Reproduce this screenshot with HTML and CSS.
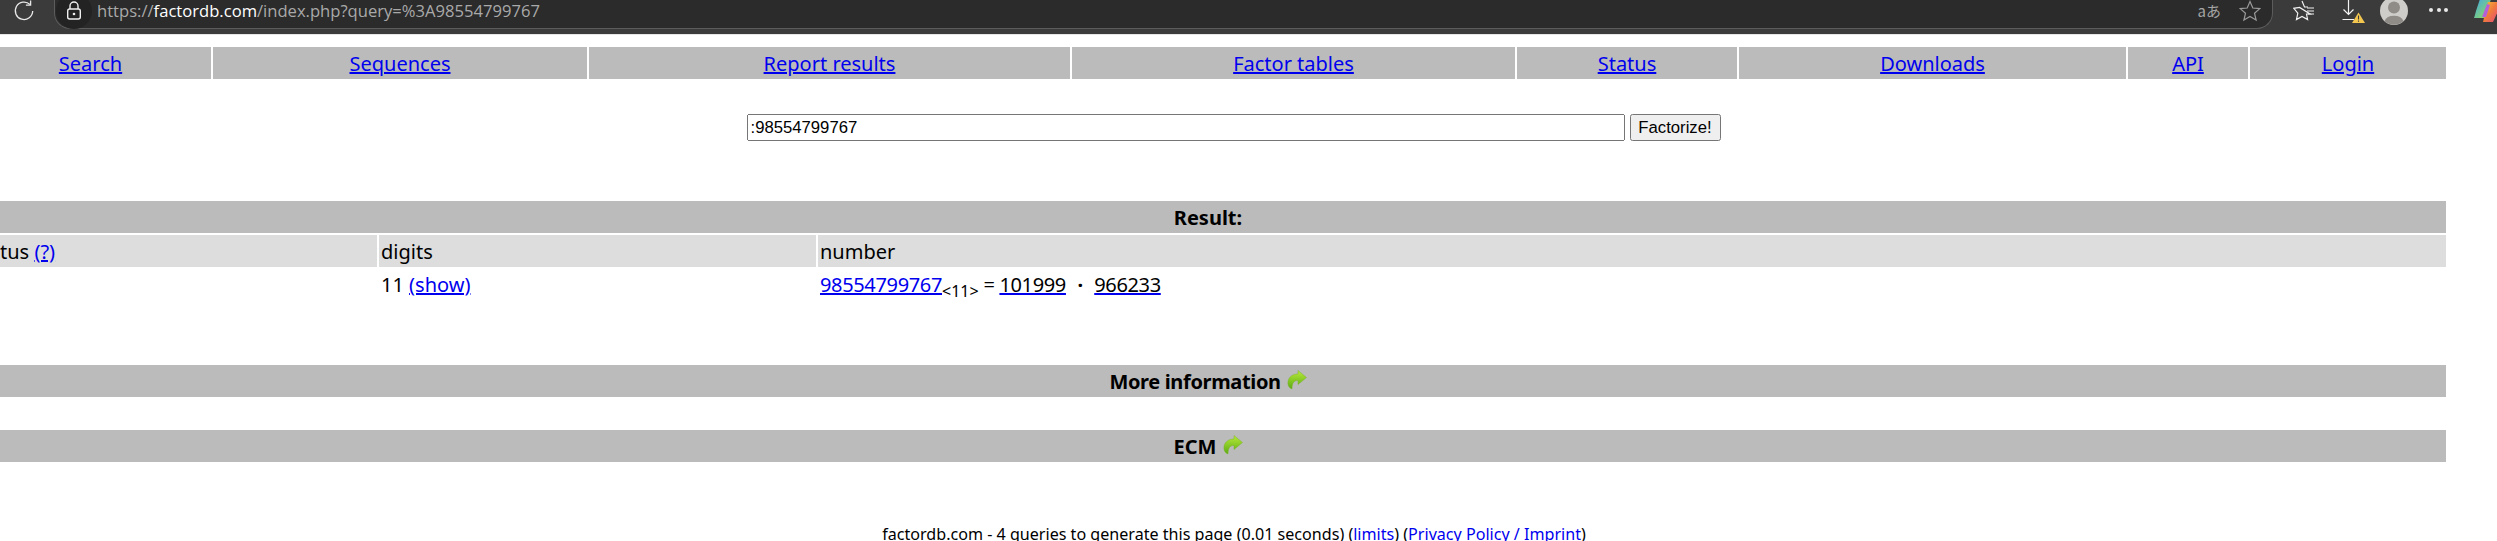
FILE: index.html
```html
<!DOCTYPE html>
<html lang="en">
<head>
    <meta charset="UTF-8">
    <meta name="viewport" content="width=device-width, initial-scale=1.0">
    <title>factordb.com</title>
    <link rel="stylesheet" href="styles.css">
</head>
<body>
    <div class="toolbar">
        <svg class="reload" width="22" height="22" viewBox="0 0 22 22">
            <path d="M17 4.5 A8.7 8.7 0 1 0 19.7 11" fill="none" stroke="#e8e8e8" stroke-width="1.3"/>
            <path d="M17.6 0.5 V5.2 H12.9" fill="none" stroke="#e8e8e8" stroke-width="1.3"/>
        </svg>
        <div class="addressbar">
            <span class="lock">
                <svg width="18" height="20" viewBox="0 0 18 20">
                    <path d="M5 8 V5 A4 4 0 0 1 13 5 V8" fill="none" stroke="#efefef" stroke-width="1.4"/>
                    <rect x="2.7" y="8" width="12.6" height="10" rx="2" fill="none" stroke="#efefef" stroke-width="1.4"/>
                    <circle cx="9" cy="13" r="1.3" fill="#efefef"/>
                </svg>
            </span>
            <span class="url">https://<b>factordb.com</b>/index.php?query=%3A98554799767</span>
            <span class="translate">aあ</span>
            <svg class="star" width="22" height="22" viewBox="0 0 22 22">
                <path d="M11 1.5 L13.8 8 L20.8 8.6 L15.5 13.2 L17.1 20 L11 16.4 L4.9 20 L6.5 13.2 L1.2 8.6 L8.2 8 Z" fill="none" stroke="#9a9a9a" stroke-width="1.2"/>
            </svg>
        </div>
        <svg class="favorites" width="22" height="22" viewBox="0 0 22 22">
            <path d="M9 1 L11.5 7 H15 M17 14 H13.5 L14.6 19.5 L9 16.4 L3.5 19.5 L4.8 13.2 L0.8 8.3 L6.6 7.4 Z" fill="none" stroke="#f2f2f2" stroke-width="1.2"/>
            <path d="M14 8 H21 M14 11 H21 M15 14 H21" stroke="#f2f2f2" stroke-width="1.2"/>
        </svg>
        <svg class="download" width="24" height="24" viewBox="0 0 24 24">
            <path d="M6.5 0 V14 M1.5 9.5 L6.5 14.5 L11.5 9.5 M0.5 19.5 H12" fill="none" stroke="#f2f2f2" stroke-width="1.2"/>
            <path d="M16.5 12.5 L23 23 H10 Z" fill="#f3c64f"/>
            <path d="M16.5 15.5 V19.5 M16.5 20.5 V21.8" stroke="#3a3a3a" stroke-width="1.1"/>
        </svg>
        <svg class="avatar" width="28" height="28" viewBox="0 0 28 28">
            <circle cx="14" cy="14" r="14" fill="#cfcdc9"/>
            <circle cx="14" cy="10.5" r="6" fill="#8f8b87"/>
            <path d="M4.5 24 A10 7.5 0 0 1 23.5 24 A14 14 0 0 1 4.5 24 Z" fill="#8f8b87"/>
        </svg>
        <div class="dots"><i></i><i></i><i></i></div>
        <svg class="copilot" width="24" height="23" viewBox="0 0 24 23">
            <defs>
                <linearGradient id="copilotA" x1="0" y1="0" x2="1" y2="1">
                    <stop offset="0" stop-color="#3fa8e8"/>
                    <stop offset="1" stop-color="#9adf4c"/>
                </linearGradient>
                <linearGradient id="copilotB" x1="0" y1="0" x2="1" y2="1">
                    <stop offset="0" stop-color="#f4c53a"/>
                    <stop offset="0.5" stop-color="#f07a3c"/>
                    <stop offset="1" stop-color="#e5487e"/>
                </linearGradient>
            </defs>
            <path d="M6 0 H17 L11 19 H0 Q1 16 2 12 Z" fill="url(#copilotA)"/>
            <path d="M14 3 H24 V12 L19 23 H9 Z" fill="url(#copilotB)"/>
            <path d="M13 5 L8 18 H12 L16 6 Z" fill="#b660d8"/>
        </svg>
    </div>

    <div class="page">
        <nav class="menu">
            <span class="first"><a href="#">Search</a></span>
            <span><a href="#">Sequences</a></span>
            <span><a href="#">Report results</a></span>
            <span><a href="#">Factor tables</a></span>
            <span><a href="#">Status</a></span>
            <span><a href="#">Downloads</a></span>
            <span><a href="#">API</a></span>
            <span><a href="#">Login</a></span>
        </nav>

        <form class="search">
            <input class="query" type="text" value=":98554799767">
            <input class="submit" type="submit" value="Factorize!">
        </form>

        <div class="bar result-bar">Result:</div>
        <div class="cols cols-head">
            <div>tus <a href="#">(?)</a></div>
            <div>digits</div>
            <div>number</div>
        </div>
        <div class="cols cols-row">
            <div></div>
            <div>11 <a href="#">(show)</a></div>
            <div class="factors"><a href="#">98554799767</a><sub>&lt;11&gt;</sub> = <a href="#"><span class="prime">101999</span></a><span class="dot">·</span><a href="#"><span class="prime">966233</span></a></div>
        </div>

        <div class="bar info-bar">More information
            <svg class="more" width="20" height="20" viewBox="0 0 20 20">
                <use href="#arrow"/>
            </svg>
        </div>
        <div class="bar ecm-bar">ECM
            <svg class="more" width="20" height="20" viewBox="0 0 20 20">
                <use href="#arrow"/>
            </svg>
        </div>

        <p class="footer">factordb.com - 4 queries to generate this page (0.01 seconds) (<a href="#">limits</a>) (<a href="#">Privacy Policy / Imprint</a>)</p>
    </div>

    <svg class="defs" width="0" height="0">
        <defs>
            <linearGradient id="arrowFill" x1="0" y1="0" x2="0" y2="1">
                <stop offset="0" stop-color="#b8ea3a"/>
                <stop offset="1" stop-color="#5cab12"/>
            </linearGradient>
            <g id="arrow">
                <path d="M11 0.5 L19.5 7.5 L11 14.5 V10.5 C7 10.5 5 13 5 19 C2 18 0.5 15 1 11.5 C1.8 6.5 6 4 11 4 Z" fill="url(#arrowFill)" stroke="#7cb32c" stroke-width="0.5"/>
            </g>
        </defs>
    </svg>
</body>
</html>
```

FILE: styles.css
```css
html, body { margin: 0; height: 541px; overflow: hidden; background-color: #fff; }
body { font-family: "Noto Sans", sans-serif; font-size: 20px; line-height: 27px; color: #000; }
a { color: #0000ee; }

/* browser chrome */
.toolbar { display: flex; align-items: flex-start; height: 35px; background-color: #3b3b3b; border-bottom: 1px solid #e6e6e6; box-sizing: border-box; overflow: hidden; }
.reload { flex: none; margin: 0 0 0 13px; }
.addressbar { flex: none; display: flex; align-items: center; box-sizing: border-box; width: 2219px; height: 29px; margin-left: 19px; background-color: #2b2b2b; border: 1px solid #5c5c5c; border-top: none; border-radius: 0 0 16px 16px; }
.lock { flex: none; display: flex; align-items: center; justify-content: center; width: 36px; height: 36px; margin: -6px 0 0 1px; background-color: #232323; border-radius: 50%; }
.url { flex: 1; margin: -6px 0 0 5px; font-family: "Open Sans", sans-serif; font-size: 16.6px; line-height: 20px; color: #a9a9a9; white-space: nowrap; }
.url b { font-weight: 400; color: #fff; }
.translate { flex: none; margin: -6px 0 0 0; font-family: "Noto Sans CJK JP", sans-serif; font-size: 15px; line-height: 20px; color: #a5a5a5; }
.star { flex: none; margin: -6px 11px 0 18px; }
.favorites { flex: none; margin: 0 0 0 20px; }
.download { flex: none; margin: 0 0 0 27px; }
.avatar { flex: none; margin: -3px 0 0 14px; }
.dots { flex: none; display: flex; gap: 3.7px; margin: 8px 0 0 21px; }
.dots i { width: 4px; height: 4px; background-color: #e8e8e8; border-radius: 50%; }
.copilot { flex: none; margin: -1px 0 0 26px; }

/* page */
.page { width: 2446px; }
.menu { display: grid; grid-template-columns: 211px 374px 481px 443px 220px 387px 120px 196px; gap: 2px; margin-top: 12px; }
.menu span { padding: 3px 0 2px; background-color: #bbb; text-align: center; }
.menu .first { padding-right: 30px; }

.search { display: flex; gap: 5px; justify-content: center; margin-top: 35px; padding-left: 21px; }
.query { box-sizing: border-box; width: 878px; height: 27px; padding: 1px 2px; font-family: "Liberation Sans", sans-serif; font-size: 16.7px; }
.submit { box-sizing: border-box; width: 91px; height: 27px; padding: 1px 2px; font-family: "Liberation Sans", sans-serif; font-size: 16.7px; }

.bar { padding: 3px 30px 2px 0; background-color: #bbb; font-weight: 700; text-align: center; }
.result-bar { margin-top: 60px; }
.info-bar { margin-top: 67px; letter-spacing: -0.35px; }
.ecm-bar { margin-top: 33px; }
.more { margin-left: 1px; vertical-align: -1px; }

.cols { display: grid; grid-template-columns: 377px 437px 1fr; gap: 2px; margin-top: 2px; }
.cols-head > div { padding: 3px 0 2px 2px; background-color: #ddd; }
.cols-head > div:first-child { padding-left: 0; }
.cols-row > div { padding: 2px 0 0 2px; }
.factors { letter-spacing: -0.35px; }
sub { font-size: 16px; line-height: 0; letter-spacing: 0; }
.prime { color: #000; }
.dot { margin: 0 11.5px; font-weight: 700; }

.footer { margin: 61px 0 0; padding-left: 22px; font-size: 16.1px; line-height: 22px; text-align: center; }
.footer a { text-decoration: none; }
.defs { position: absolute; }
```
